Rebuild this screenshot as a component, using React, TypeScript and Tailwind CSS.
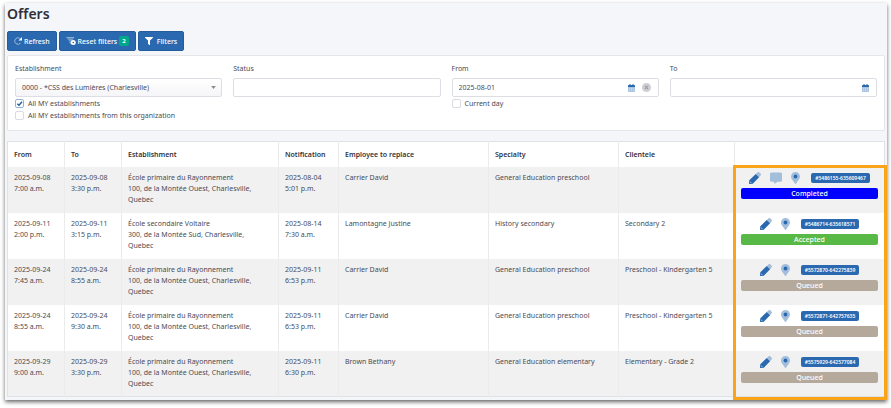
import { useState } from "react";
import type { ReactNode } from "react";

type Status = "Completed" | "Accepted" | "Queued";

interface Offer {
  id: string;
  from: [string, string];
  to: [string, string];
  school: string;
  address: string;
  notified: [string, string];
  employee: string;
  specialty: string;
  clientele: string;
  status: Status;
  hasComment?: boolean;
}

const STATUS_COLORS: Record<Status, string> = {
  Completed: "bg-[#0000ff]",
  Accepted: "bg-[#58b947]",
  Queued: "bg-[#b5a99c]",
};

const OFFERS: Offer[] = [
  {
    id: "#5486155-635609467",
    from: ["2025-09-08", "7:00 a.m."],
    to: ["2025-09-08", "3:30 p.m."],
    school: "École primaire du Rayonnement",
    address: "100, de la Montée Ouest, Charlesville,",
    notified: ["2025-08-04", "5:01 p.m."],
    employee: "Carrier David",
    specialty: "General Education preschool",
    clientele: "",
    status: "Completed",
    hasComment: true,
  },
  {
    id: "#5486714-635618571",
    from: ["2025-09-11", "2:00 p.m."],
    to: ["2025-09-11", "3:15 p.m."],
    school: "École secondaire Voltaire",
    address: "300, de la Montée Sud, Charlesville,",
    notified: ["2025-08-14", "7:30 a.m."],
    employee: "Lamontagne Justine",
    specialty: "History secondary",
    clientele: "Secondary 2",
    status: "Accepted",
  },
  {
    id: "#5572870-642275839",
    from: ["2025-09-24", "7:45 a.m."],
    to: ["2025-09-24", "8:55 a.m."],
    school: "École primaire du Rayonnement",
    address: "100, de la Montée Ouest, Charlesville,",
    notified: ["2025-09-11", "6:53 p.m."],
    employee: "Carrier David",
    specialty: "General Education preschool",
    clientele: "Preschool - Kindergarten 5",
    status: "Queued",
  },
  {
    id: "#5572871-642757635",
    from: ["2025-09-24", "8:55 a.m."],
    to: ["2025-09-24", "9:30 a.m."],
    school: "École primaire du Rayonnement",
    address: "100, de la Montée Ouest, Charlesville,",
    notified: ["2025-09-11", "6:53 p.m."],
    employee: "Carrier David",
    specialty: "General Education preschool",
    clientele: "Preschool - Kindergarten 5",
    status: "Queued",
  },
  {
    id: "#5575929-642577084",
    from: ["2025-09-29", "9:00 a.m."],
    to: ["2025-09-29", "3:30 p.m."],
    school: "École primaire du Rayonnement",
    address: "100, de la Montée Ouest, Charlesville,",
    notified: ["2025-09-11", "6:30 p.m."],
    employee: "Brown Bethany",
    specialty: "General Education elementary",
    clientele: "Elementary - Grade 2",
    status: "Queued",
  },
];

function PencilIcon() {
  return (
    <svg viewBox="0 0 512 512" className="size-3">
      <path fill="#a3bedb" d="M498 142l-68 78L290 85l80-71c19-19 49-19 68 0l60 60c19 19 19 49 0 68z" />
      <path fill="#2a69b0" d="M12 352L.3 486c-1.500 15 11 27 26 26L160 500 430 220 290 85 12 352z" />
      <path fill="#c9d9ea" d="M60 400l52 52-30 14-36-36z" />
    </svg>
  );
}

function CommentIcon() {
  return (
    <svg viewBox="0 0 512 512" className="size-3">
      <path fill="#a3bedb" d="M64 20h384c35 0 64 29 64 64v268c0 35-29 64-64 64H320l-120 88c-8 6-20 0-20-10v-78H64c-35 0-64-29-64-64V84c0-35 29-64 64-64z" />
    </svg>
  );
}

function PinIcon() {
  return (
    <svg viewBox="0 0 384 512" className="h-3 w-[9px]">
      <path fill="#a3bedb" d="M192 0C86 0 0 86 0 192c0 77 27 99 172 310 10 14 31 14 41 0C357 291 384 269 384 192 384 86 298 0 192 0z" />
      <circle cx="192" cy="192" r="82" fill="#2a69b0" />
    </svg>
  );
}

function CalendarIcon() {
  return (
    <svg viewBox="0 0 448 512" className="h-2 w-[7px]">
      <path fill="#a9c3e0" d="M0 192h448v272c0 26-22 48-48 48H48c-26 0-48-22-48-48V192z" />
      <path fill="#d5e2f0" d="M70 250h66v60H70zM190 250h66v60h-66zM310 250h66v60h-66zM70 370h66v60H70zM190 370h66v60h-66zM310 370h66v60h-66z" />
      <path fill="#2a69b0" d="M448 112v80H0v-80c0-26 22-48 48-48h48V16c0-9 7-16 16-16h32c9 0 16 7 16 16v48h128V16c0-9 7-16 16-16h32c9 0 16 7 16 16v48h48c26 0 48 22 48 48z" />
    </svg>
  );
}

function RefreshIcon() {
  return (
    <svg viewBox="0 0 16 16" className="size-2" fill="none">
      <path d="M13 12.200A6.500 6.500 0 1 1 11.500 2.600" stroke="#9dbadb" strokeWidth="2" />
      <path d="M9 7h7V0z" fill="#fff" />
    </svg>
  );
}

function FilterIcon() {
  return (
    <svg viewBox="0 0 512 512" className="size-2">
      <path fill="#fff" d="M488 0H24C3 0-8 26 7 41l185 185v206c0 8 4 15 10 20l80 56c16 11 38 0 38-20V226L505 41C520 26 509 0 488 0z" />
    </svg>
  );
}

function ResetFilterIcon() {
  return (
    <svg viewBox="0 0 20 16" className="h-2 w-[10px]">
      <path fill="#8fb1d6" d="M0 0h17l-2 3H2.500zM3.500 4.500h11L12 7.500H6zM7 9h3v5L7 12z" />
      <circle cx="14.500" cy="11" r="5" fill="#fff" />
      <circle cx="14.500" cy="11" r="1.600" fill="#2a69b0" />
    </svg>
  );
}

function ToolButton({ icon, children }: { icon: ReactNode; children: ReactNode }) {
  return (
    <button
      type="button"
      className="flex h-5 items-center gap-0.5 rounded-xs border border-[#245c9c] bg-[#2a69b0] px-[6px] text-[7px] font-medium text-white"
    >
      {icon}
      {children}
    </button>
  );
}

function Check({ label, defaultChecked }: { label: string; defaultChecked?: boolean }) {
  return (
    <label className="flex h-3 items-center gap-1 whitespace-nowrap">
      <span className="relative flex">
        <input
          type="checkbox"
          defaultChecked={defaultChecked}
          className="peer size-[9px] appearance-none rounded-xs border border-[#d9dbe0] bg-white checked:border-[#8fb3d9]"
        />
        <svg viewBox="0 0 9 9" fill="none" className="pointer-events-none absolute inset-0 hidden peer-checked:block">
          <path d="M2.300 4.700L4 6.300l3-3.600" stroke="#1f5fa8" strokeWidth="1.400" />
        </svg>
      </span>
      {label}
    </label>
  );
}

function DateField({ id, label, value, onChange, children }: {
  id: string;
  label: string;
  value: string;
  onChange: (value: string) => void;
  children?: ReactNode;
}) {
  return (
    <div>
      <label htmlFor={id} className="mb-1 block">{label}</label>
      <div className="relative">
        <input
          id={id}
          type="text"
          value={value}
          onChange={(e) => onChange(e.target.value)}
          className="block h-[19px] w-full rounded-xs border border-[#dcdee4] bg-white px-1.5"
        />
        <div className="absolute inset-y-0 right-2 flex items-center gap-[7px]">
          <button type="button" aria-label={`Pick date: ${label}`}>
            <CalendarIcon />
          </button>
          {value && (
            <button type="button" aria-label={`Clear: ${label}`} onClick={() => onChange("")}>
              <svg viewBox="0 0 16 16" className="size-[9px]">
                <circle cx="8" cy="8" r="8" fill="#cfcfd4" />
                <path d="M5 5l6 6M11 5l-6 6" stroke="#9a9aa2" strokeWidth="2" />
              </svg>
            </button>
          )}
        </div>
      </div>
      {children}
    </div>
  );
}

function Filters() {
  const [from, setFrom] = useState("2025-08-01");
  const [to, setTo] = useState("");

  return (
    <form className="grid grid-cols-4 gap-x-[11px] rounded-xs border border-[#e4e6eb] bg-white px-[7px] pt-[7px] pb-[9px]">
      <div>
        <label htmlFor="establishment" className="mb-1 block">Establishment</label>
        <div className="relative">
          <select
            id="establishment"
            className="block h-[19px] w-full appearance-none rounded-xs border border-[#dcdee4] bg-linear-to-b from-white to-[#f5f5f7] px-1.5"
          >
            <option>0000 - *CSS des Lumières (Charlesville)</option>
          </select>
          <svg viewBox="0 0 8 5" className="pointer-events-none absolute top-2 right-1.5 h-[3px] w-[5px]">
            <path d="M0 0h8L4 5z" fill="#8b8b93" />
          </svg>
        </div>
        <Check label="All MY establishments" defaultChecked />
        <Check label="All MY establishments from this organization" />
      </div>
      <div>
        <label htmlFor="status" className="mb-1 block">Status</label>
        <input id="status" type="text" className="block h-[19px] w-full rounded-xs border border-[#dcdee4] bg-white px-1.5" />
      </div>
      <DateField id="from" label="From" value={from} onChange={setFrom}>
        <Check label="Current day" />
      </DateField>
      <DateField id="to" label="To" value={to} onChange={setTo} />
    </form>
  );
}

function OfferRow({ offer }: { offer: Offer }) {
  return (
    <tr className="h-[46px] align-top odd:bg-[#f1f1f1] even:bg-white [&>td]:border-r [&>td]:border-[#ebebeb] [&>td]:px-1.5 [&>td]:pt-[5px] [&>td:last-child]:border-r-0">
      <td>{offer.from[0]}<br />{offer.from[1]}</td>
      <td>{offer.to[0]}<br />{offer.to[1]}</td>
      <td>{offer.school}<br />{offer.address}<br />Quebec</td>
      <td>{offer.notified[0]}<br />{offer.notified[1]}</td>
      <td>{offer.employee}</td>
      <td>{offer.specialty}</td>
      <td>{offer.clientele}</td>
      <td>
        <div className="flex items-center justify-center gap-[9px]">
          <button type="button" aria-label="Edit"><PencilIcon /></button>
          {offer.hasComment && <button type="button" aria-label="Comment"><CommentIcon /></button>}
          <button type="button" aria-label="Location"><PinIcon /></button>
          <span className="ml-0.5 rounded-xs bg-[#2a69b0] px-1 text-[5px] leading-[10px] font-semibold text-white">{offer.id}</span>
        </div>
        <div className={`mt-1 rounded-xs text-center leading-[11px] font-medium text-white ${STATUS_COLORS[offer.status]}`}>
          {offer.status}
        </div>
      </td>
    </tr>
  );
}

export default function App() {
  return (
    <div className="min-h-screen bg-white pt-[3px] pr-1 pb-2 pl-[5px] font-['Noto_Sans',sans-serif] text-[7px] leading-[11px] text-[#4b4b55]">
      <main className="bg-[#f5f6f9] px-0.5 pt-0.5 pb-[3px] shadow-[0_2px_4px_0_rgba(0,0,0,0.6)]">
        <h1 className="text-[14px] leading-[18px] font-semibold text-[#2f2f3a]">Offers</h1>

        <div className="mt-2 mb-1 flex gap-0.5">
          <ToolButton icon={<RefreshIcon />}>Refresh</ToolButton>
          <ToolButton icon={<ResetFilterIcon />}>
            Reset filters
            <span className="rounded-xs bg-[#00a88a] px-[3px] text-[6px] leading-[10px] font-bold">2</span>
          </ToolButton>
          <ToolButton icon={<FilterIcon />}>
            <span className="pl-0.5">Filters</span>
          </ToolButton>
        </div>

        <Filters />

        <div className="relative mt-[10px]">
          <table className="w-full table-fixed border border-[#e0e1e6]">
            <thead>
              <tr className="h-[25px] bg-white text-left text-[#33333d] [&>th]:border-r [&>th]:border-[#ebebeb] [&>th]:px-1.5 [&>th]:font-semibold [&>th:last-child]:border-r-0">
                <th className="w-[57px]">From</th>
                <th className="w-[57px]">To</th>
                <th className="w-[157px]">Establishment</th>
                <th className="w-[60px]">Notification</th>
                <th>Employee to replace</th>
                <th className="w-[130px]">Specialty</th>
                <th className="w-[116px]">Clientele</th>
                <th className="w-[150px]" aria-label="Actions" />
              </tr>
            </thead>
            <tbody>
              {OFFERS.map((offer) => (
                <OfferRow key={offer.id} offer={offer} />
              ))}
            </tbody>
          </table>
          <div className="pointer-events-none absolute top-6 -right-0.5 -bottom-[3px] w-[154px] border-3 border-[#faa41a]" />
        </div>
      </main>
    </div>
  );
}
